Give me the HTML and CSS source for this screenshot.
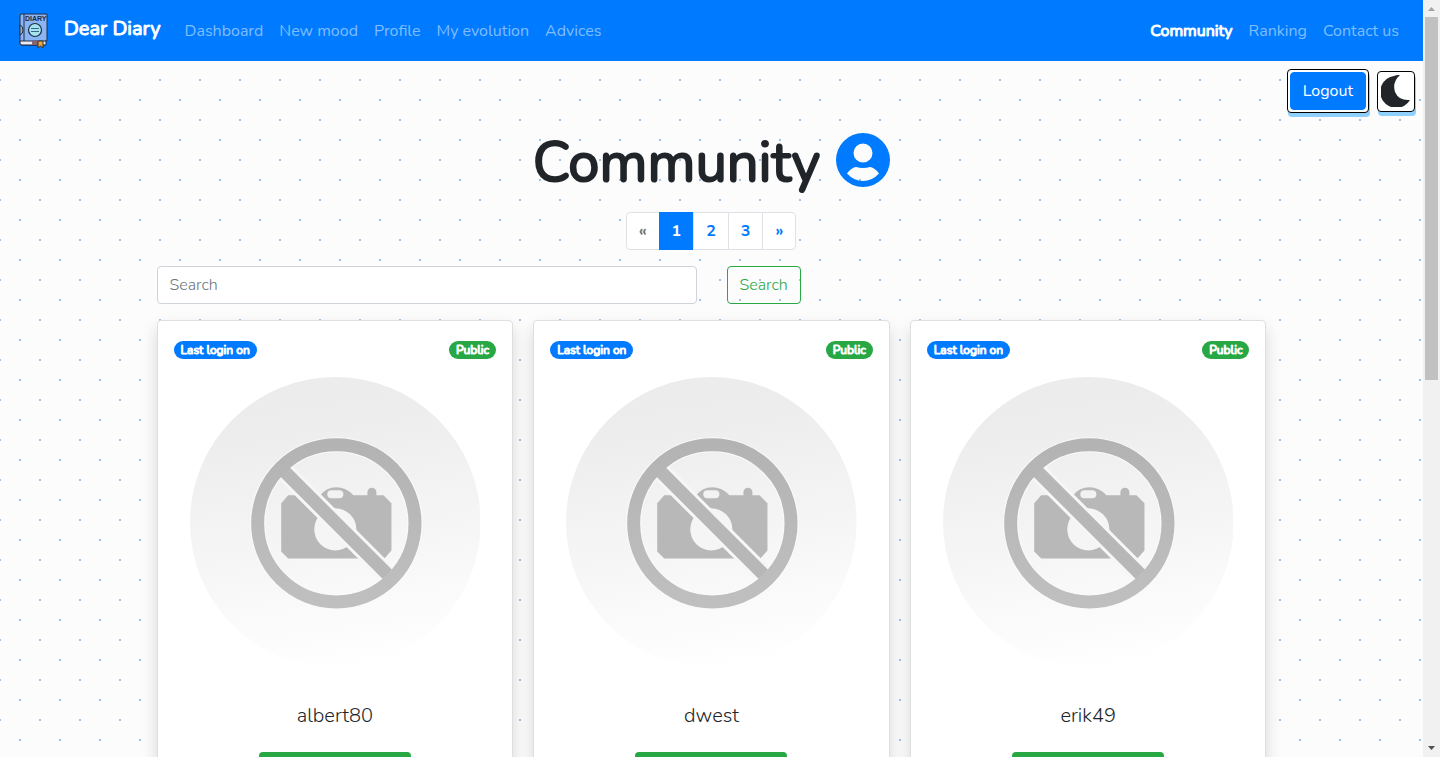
FILE: index.html
```html
<!DOCTYPE html>
<html lang="en">
<head>
<meta charset="utf-8">
<meta name="viewport" content="width=device-width, initial-scale=1">
<title>Dear Diary</title>
<link rel="stylesheet" href="styles.css">
</head>
<body>
<svg class="defs" width="0" height="0" aria-hidden="true">
  <defs>
    <linearGradient id="fade" x1="0.42" y1="0" x2="0.58" y2="1">
      <stop offset="0.1" stop-color="#ececec"/>
      <stop offset="0.5" stop-color="#f4f4f4"/>
      <stop offset="1" stop-color="#ffffff"/>
    </linearGradient>
    <linearGradient id="ring" x1="0" y1="0" x2="0" y2="1">
      <stop offset="0" stop-color="#b3b3b3"/>
      <stop offset="1" stop-color="#bfbfbf"/>
    </linearGradient>
    <symbol id="no-photo" viewBox="0 0 290 290">
      <circle cx="145" cy="145" r="145" fill="url(#fade)"/>
      <path d="M98 118H130Q136 110 146 110T163 118H177V115a4 4 0 0 1 9 0V118H193L201 126V173L194 181H98L91 174V126Z" fill="#b8b8b8"/>
      <rect x="137" y="113" width="16" height="8" rx="4" fill="#f2f2f2"/>
      <circle cx="145" cy="152" r="21" fill="#f5f5f5"/>
      <path d="M90 90L202 202" stroke="#f6f6f6" stroke-width="19"/>
      <circle cx="146" cy="146" r="78.500" fill="none" stroke="#fafafa" stroke-width="15"/>
      <path d="M91 91L201 201" stroke="#b7b7b7" stroke-width="13"/>
      <circle cx="146" cy="146" r="78.500" fill="none" stroke="url(#ring)" stroke-width="13"/>
    </symbol>
  </defs>
</svg>
<div class="page">
  <header class="navbar">
    <a class="logo" href="#" aria-label="Dear Diary">
      <svg width="30" height="36" viewBox="0 0 30 36">
        <path d="M3 1H29V28H27V32H4Q2 32 2 30V3Q2 1 3 1Z" fill="#8ab5f5" stroke="#202c45"/>
        <path d="M6 1V28" stroke="#202c45"/>
        <path d="M2 12Q5 13 5 17T2 22Z" fill="#9fb4b8" stroke="#202c45"/>
        <path d="M2 28H28V32H4Q2 32 2 30Z" fill="#e8ecf2" stroke="#202c45"/>
        <path d="M14 28H20V32H14Z" fill="#8b6470"/>
        <path d="M20 28H25V35L22.500 33L20 35Z" fill="#e9a83c" stroke="#3c3030"/>
        <circle cx="17" cy="17" r="6.500" fill="#a5e4ee" stroke="#202c45" stroke-width="1.200"/>
        <path d="M13 15.500H21M13 18.500H21" stroke="#336a80"/>
        <text class="logo-text" x="7" y="8">DIARY</text>
      </svg>
    </a>
    <a class="brand" href="#">Dear Diary</a>
    <nav class="links">
      <a href="#">Dashboard</a><a href="#">New mood</a><a href="#">Profile</a><a href="#">My evolution</a><a href="#">Advices</a>
    </nav>
    <nav class="links links-end">
      <a class="active" href="#">Community</a><a href="#">Ranking</a><a href="#">Contact us</a>
    </nav>
  </header>

  <div class="tools">
    <div class="logout-frame"><button class="logout" type="button">Logout</button></div>
    <button class="theme" type="button" aria-label="Dark mode">
      <svg width="30" height="32" viewBox="0 0 30 32"><path d="M19 0Q16 -.2 13 1A16 16 0 1 0 29 25Q18 26 14 17Q11 7 19 0Z" fill="#212529"/></svg>
    </button>
  </div>

  <main class="container">
    <h1>Community
      <svg width="54" height="54" viewBox="0 0 54 54"><path fill-rule="evenodd" d="M27 0a27 27 0 1 0 0 54a27 27 0 1 0 0-54ZM27 10.500a9.500 9.500 0 1 1 0 19a9.500 9.500 0 1 1 0-19ZM11 40.500Q16 34 20 34Q27 36 34 34Q38 34 43 40.500Q36 48 27 48T11 40.500Z" fill="#007bff"/></svg>
    </h1>
    <nav class="pages">
      <span>«</span><a class="current" href="#">1</a><a href="#">2</a><a href="#">3</a><a href="#">»</a>
    </nav>
    <form class="search">
      <input type="search" placeholder="Search" aria-label="Search">
      <button type="button">Search</button>
    </form>
    <section class="cards">
      <article class="card">
        <div class="badges"><span class="badge">Last login on</span><span class="badge public">Public</span></div>
        <svg class="photo" viewBox="0 0 290 290"><use href="#no-photo"/></svg>
        <h2>albert80</h2>
        <button class="visit" type="button"></button>
      </article>
      <article class="card">
        <div class="badges"><span class="badge">Last login on</span><span class="badge public">Public</span></div>
        <svg class="photo" viewBox="0 0 290 290"><use href="#no-photo"/></svg>
        <h2>dwest</h2>
        <button class="visit" type="button"></button>
      </article>
      <article class="card">
        <div class="badges"><span class="badge">Last login on</span><span class="badge public">Public</span></div>
        <svg class="photo" viewBox="0 0 290 290"><use href="#no-photo"/></svg>
        <h2>erik49</h2>
        <button class="visit" type="button"></button>
      </article>
    </section>
  </main>
</div>
<div class="scrollbar" aria-hidden="true">
  <svg width="17" height="17" viewBox="0 0 17 17"><path d="M5 11L8.500 7L12 11Z" fill="#a3a3a3"/></svg>
  <div class="thumb"></div>
  <svg width="17" height="17" viewBox="0 0 17 17"><path d="M5 6L8.500 10L12 6Z" fill="#505050"/></svg>
</div>
</body>
</html>
```
FILE: styles.css
```css
* { box-sizing: border-box; }
body {
  margin: 0;
  height: 100vh;
  overflow: hidden;
  display: flex;
  font: 300 16px/24px Nunito, "Open Sans", sans-serif;
  color: #212529;
  background-color: #fcfcfc;
  background-image: radial-gradient(#a3c4e8 1px, transparent 1px), radial-gradient(#a3c4e8 1px, transparent 1px);
  background-size: 40px 40px;
  background-position: 0 0, 20px 20px;
}
a { color: inherit; text-decoration: none; }
button, input { font: inherit; margin: 0; }
svg { display: block; }
.defs { position: absolute; }
.page { flex: 1; min-width: 0; }

.navbar {
  display: flex;
  align-items: center;
  height: 61px;
  padding: 0 16px 0 18px;
  background: #007bff;
  color: #80bdff;
}
.logo { margin-right: 16px; }
.logo-text { font: 700 7px "Liberation Sans", sans-serif; fill: #1c2a44; }
.brand { color: #fff; font-size: 20px; font-weight: 400; -webkit-text-stroke: 1px #fff; line-height: 30px; margin-right: 16px; padding-bottom: 4px; }
.links { display: flex; }
.links a { padding: 8px; font-weight: 400; }
.links-end { margin-left: auto; }
.links .active { color: #fff; -webkit-text-stroke: 1px #fff; }

.tools { display: flex; justify-content: flex-end; align-items: center; gap: 8px; padding: 8px 8px 0; }
.logout-frame, .theme { background: #fff; border: 1px solid #000; border-radius: 4px; box-shadow: 1px 4px #90d0ff; }
.logout-frame { padding: 2px; }
.logout { display: block; height: 38px; padding: 0 12px; border: 1px solid #007bff; border-radius: 4px; background: #007bff; color: #fff; font-weight: 400; }
.theme { padding: 3px; height: 41px; }

.container { width: 100%; max-width: 1140px; margin: 0 auto; padding: 0 15px; }
h1 { display: flex; justify-content: center; align-items: center; gap: 16px; height: 72px; margin: 14px 0 13px; font-size: 56px; font-weight: 400; -webkit-text-stroke: 2px #212529; line-height: 72px; }
h1 svg { margin-bottom: 6px; }

.pages { display: flex; justify-content: center; height: 38px; font-weight: 700; color: #007bff; }
.pages > * { padding: 6px 12px; border: 1px solid #dee2e6; margin-left: -1px; background: #fff; }
.pages > :first-child { border-radius: 4px 0 0 4px; color: #6c757d; }
.pages > :last-child { border-radius: 0 4px 4px 0; }
.pages .current { background: #007bff; border-color: #007bff; color: #fff; }

.search { display: grid; grid-template-columns: 1fr 1fr; gap: 30px; justify-items: start; margin: 16px 0; }
.search input { width: 100%; height: 38px; padding: 6px 12px; border: 1px solid #ced4da; border-radius: 4px; background: #fff; }
.search input::placeholder { color: #6c757d; opacity: 1; }
.search button { height: 38px; padding: 0 12px; border: 1px solid #28a745; border-radius: 4px; background: transparent; color: #28a745; }

.cards { display: grid; grid-template-columns: repeat(3, 1fr); gap: 20px; }
.card { display: flex; flex-direction: column; padding: 20px 16px; border: 1px solid #dfdfdf; border-radius: 4px; background: #fff; box-shadow: 0 8px 16px rgba(0, 0, 0, .15); }
.badges { display: flex; justify-content: space-between; }
.badge { padding: 0 7px; border-radius: 9px; background: #007bff; color: #fff; font-size: 12px; font-weight: 400; -webkit-text-stroke: 1px #fff; line-height: 18px; }
.public { background: #28a745; }
.photo { align-self: stretch; margin: 18px 16px 0; }
.card h2 { margin: 36px 0 24px; text-align: center; font-size: 20px; font-weight: 300; line-height: 24px; }
.visit { align-self: center; width: 152px; height: 38px; border: 0; border-radius: 4px; background: #28a745; }

.scrollbar { display: flex; flex-direction: column; width: 17px; background: #f1f1f1; }
.scrollbar svg:last-child { margin-top: auto; }
.thumb { height: 48%; margin: 0 2px; background: #c1c1c1; }
```
